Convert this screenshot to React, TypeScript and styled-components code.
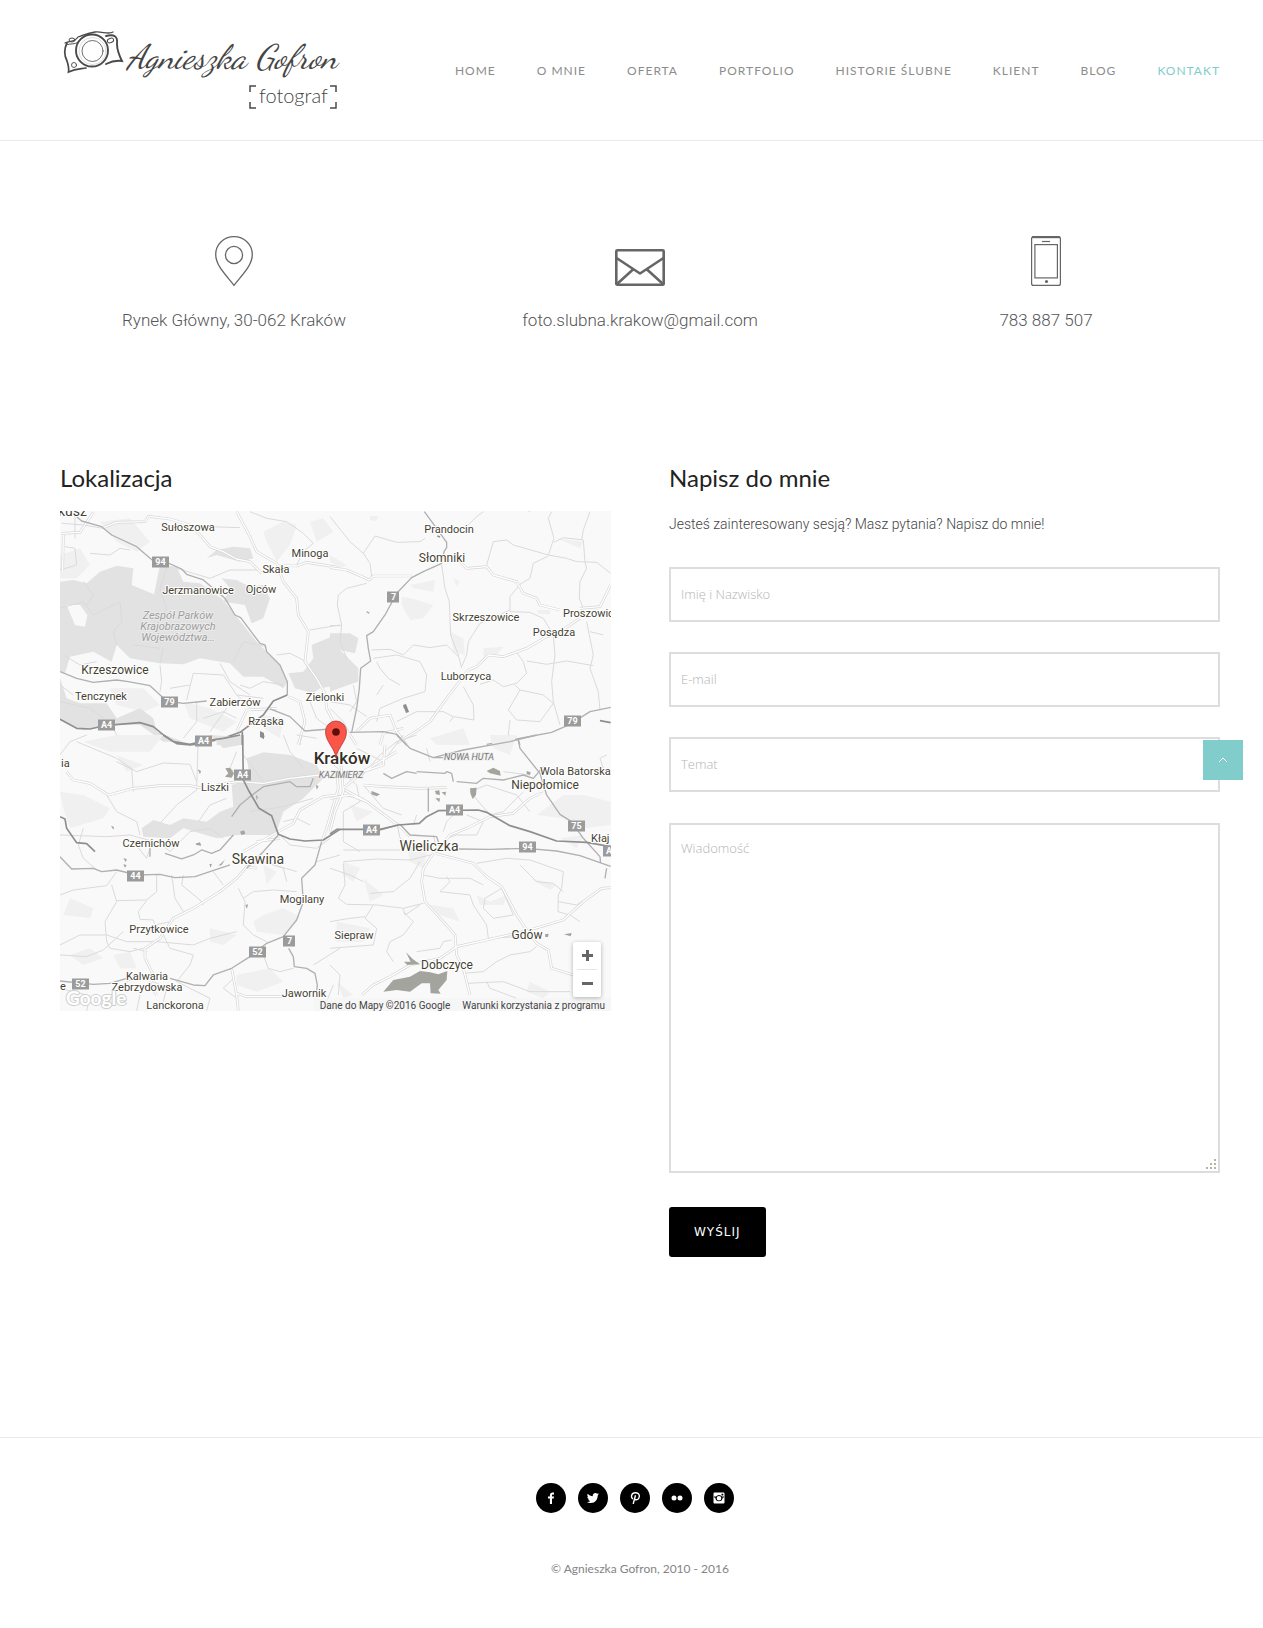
import React from "react";
import styled, { createGlobalStyle } from "styled-components";

const GlobalStyle = createGlobalStyle`
  * { box-sizing: border-box; }
  body { margin: 0; background: #fff; color: #666; font-family: Lato, sans-serif; }
  h2, p { margin: 0; }
`;

const slab = `"Roboto Slab", Roboto, sans-serif`;

const Page = styled.div`
  position: relative;
`;

const Header = styled.header`
  display: flex;
  justify-content: space-between;
  align-items: center;
  height: 141px;
  padding: 2px 43px 0 60px;
  border-bottom: 1px solid #eaeaea;
`;

const LogoLink = styled.a`
  display: block;
  line-height: 0;
`;

const Nav = styled.nav`
  display: flex;
  gap: 41px;
`;

const NavLink = styled.a<{ $active?: boolean }>`
  font-size: 12px;
  line-height: 20px;
  letter-spacing: 1px;
  text-transform: uppercase;
  text-decoration: none;
  white-space: nowrap;
  color: ${(p) => (p.$active ? "#80cdcc" : "#8c8c8c")};
`;

const Main = styled.main`
  padding: 95px 43px 180px 60px;
`;

const Contacts = styled.section`
  display: grid;
  grid-template-columns: repeat(3, 1fr);
  gap: 58px;
  margin-bottom: 131px;
`;

const Contact = styled.div`
  display: flex;
  flex-direction: column;
  align-items: center;
  gap: 20px;
`;

const ContactText = styled.p`
  font-family: ${slab};
  font-weight: 300;
  font-size: 17px;
  line-height: 28px;
  color: #555;
`;

const Columns = styled.div`
  display: grid;
  grid-template-columns: 1fr 1fr;
  gap: 58px;
  align-items: start;
`;

const Heading = styled.h2`
  font-size: 24px;
  font-weight: 400;
  line-height: 26px;
  margin-bottom: 20px;
  color: #222;
`;

const MapBox = styled.div`
  position: relative;
  height: 500px;
  overflow: hidden;
  background: #f9f9f9;
`;

const MapSvg = styled.svg`
  display: block;
  width: 100%;
  height: 100%;
  font-family: Roboto, sans-serif;
`;

const ZoomControl = styled.div`
  position: absolute;
  right: 10px;
  bottom: 14px;
  width: 28px;
  padding: 0 4px;
  background: #fff;
  border-radius: 2px;
  box-shadow: 0 1px 4px rgba(0, 0, 0, 0.3);
`;

const ZoomButton = styled.button`
  display: flex;
  align-items: center;
  justify-content: center;
  width: 100%;
  height: 27px;
  padding: 0;
  border: 0;
  background: none;
  & + & {
    height: 28px;
    border-top: 1px solid #e6e6e6;
  }
`;

const Credits = styled.div`
  position: absolute;
  right: 0;
  bottom: 0;
  display: flex;
  gap: 12px;
  padding: 2px 6px 0;
  background: rgba(245, 245, 245, 0.7);
  font-family: Roboto, sans-serif;
  font-size: 10px;
  line-height: 11px;
  color: #444;
`;

const CreditLink = styled.a`
  color: #444;
  text-decoration: none;
`;

const Intro = styled.p`
  font-family: ${slab};
  font-weight: 300;
  font-size: 14px;
  line-height: 26px;
  margin-bottom: 30px;
  color: #444;
`;

const Form = styled.form`
  display: flex;
  flex-direction: column;
  align-items: stretch;
  gap: 30px;
`;

const fieldStyle = `
  display: block;
  width: 100%;
  margin: 0;
  border: 2px solid #ddd;
  border-radius: 0;
  outline: 0;
  background: #fff;
  color: #666;
  font-family: "Open Sans", sans-serif;
  font-weight: 300;
  font-size: 13px;
  &::placeholder { color: #b4b4b4; opacity: 1; }
`;

const Input = styled.input`
  ${fieldStyle}
  height: 55px;
  padding: 0 10px 2px;
`;

const gripDot = "linear-gradient(#b5b5a2, #b5b5a2)";

const Textarea = styled.textarea`
  ${fieldStyle}
  height: 350px;
  margin-top: 1px;
  padding: 13px 10px;
  line-height: 20px;
  resize: vertical;
  &::-webkit-resizer {
    background-image: ${Array(6).fill(gripDot).join(", ")};
    background-repeat: no-repeat;
    background-size: 2px 2px;
    background-position:
      right 2px bottom 2px, right 6px bottom 2px, right 10px bottom 2px,
      right 2px bottom 6px, right 6px bottom 6px, right 2px bottom 10px;
  }
`;

const Submit = styled.button`
  align-self: flex-start;
  height: 50px;
  margin-top: 4px;
  padding: 0 25px;
  border: 0;
  border-radius: 3px;
  background: #000;
  color: #fff;
  font-family: "DejaVu Sans", sans-serif;
  font-size: 12px;
  letter-spacing: 1px;
`;

const ToTop = styled.a`
  position: absolute;
  top: 740px;
  right: 20px;
  display: flex;
  align-items: center;
  justify-content: center;
  width: 40px;
  height: 40px;
  background: #80cdcc;
`;

const Footer = styled.footer`
  display: flex;
  flex-direction: column;
  align-items: center;
  gap: 44px;
  padding: 45px 43px 46px 60px;
  border-top: 1px solid #eaeaea;
`;

const Socials = styled.div`
  display: flex;
  gap: 12px;
  padding-right: 10px;
`;

const Social = styled.a`
  display: flex;
  align-items: center;
  justify-content: center;
  width: 30px;
  height: 30px;
  border-radius: 50%;
  background: #000;
`;

const Copyright = styled.p`
  font-size: 12px;
  line-height: 24px;
  color: #848484;
`;

const Logo = () => (
  <svg width="282" height="90" viewBox="0 0 282 90" fill="none" stroke="#4a4a4a" strokeLinecap="round">
    <g strokeWidth="1.3" transform="translate(0 1)">
      <path d="M7 16C4 22 4 28 7 34C9 40 9 42 8.500 45C16 41 21 42 26 41" strokeWidth="1.700" />
      <path d="M5 16C10 13 14 16 18 10C24 8 28 6 35 5C42 4 48 8 53 5" />
      <path d="M6 18C11 16 15 18 18 15" strokeWidth="1" />
      <path d="M46 9C54 7 58 9 57 17C57 24 59 28 62 34C56 33 50 35 46 37" strokeWidth="1.900" />
      <circle cx="32" cy="23.500" r="16" strokeWidth="1.900" />
      <circle cx="32.500" cy="24" r="10.500" strokeWidth=".8" />
      <circle cx="32.500" cy="24" r="13.500" stroke="#bbb" strokeWidth=".5" />
      <ellipse cx="12" cy="13" rx="3" ry="2" strokeWidth="1" />
      <ellipse cx="50.500" cy="13.500" rx="3.200" ry="2.200" transform="rotate(-20 50.500 13.500)" strokeWidth="1" />
      <circle cx="14" cy="38" r="2.500" strokeWidth=".9" />
    </g>
    <g fill="#444" stroke="none">
      <text x="67" y="42" fontSize="34" fontStyle="italic" fontFamily='"Dancing Script", "Liberation Serif", cursive'>Agnieszka Gofron</text>
      <text x="199" y="77" fontSize="20" fontWeight="300" fontFamily='"Century Gothic", Lato, sans-serif'>fotograf</text>
    </g>
    <path d="M196 60H190V66M190 76V82H196M270 60H276V66M276 76V82H270" strokeWidth="1.500" strokeLinecap="butt" />
  </svg>
);

const PinIcon = () => (
  <svg width="50" height="50" viewBox="0 0 50 50" fill="none" stroke="#666" strokeWidth="1.300">
    <path d="M25 49.300C18 40 6.700 30 6.700 18.500C6.700 8 15 .7 25 .7S43.300 8 43.300 18.500C43.300 30 32 40 25 49.300Z" />
    <circle cx="25" cy="19" r="8.600" />
  </svg>
);

const MailIcon = () => (
  <svg width="50" height="50" viewBox="0 0 50 50" fill="none" stroke="#666" strokeWidth="2.600" strokeLinejoin="round">
    <rect x="1.300" y="14.300" width="47.400" height="34.400" rx="1" />
    <path d="M1.500 22L25 37.500L48.500 22M2 48L18 33.500M48 48L32 33.500" />
  </svg>
);

const PhoneIcon = () => (
  <svg width="50" height="50" viewBox="0 0 50 50" fill="none" stroke="#666" strokeWidth="1.200">
    <rect x="10.600" y=".7" width="28.800" height="48.700" rx="2" />
    <path d="M11 1.200H39" strokeWidth="2" />
    <rect x="13.900" y="8.600" width="22.500" height="33.300" />
    <path d="M21 5.500H29" />
    <circle cx="25.500" cy="45.500" r="1.600" fill="#666" stroke="none" />
  </svg>
);

type Label = [string, number, number, number?, ("start" | "middle")?];

const towns: Label[] = [
  ["Sułoszowa", 128, 20], ["Minoga", 250, 46], ["Skała", 216, 62], ["Jerzmanowice", 138, 83],
  ["Ojców", 201, 82], ["kusz", -2, 5, 14, "start"], ["Krzeszowice", 55, 163, 12], ["Tenczynek", 41, 189],
  ["Zabierzów", 175, 195], ["Rząska", 206, 214], ["Zielonki", 265, 190], ["Prandocin", 389, 22],
  ["Słomniki", 382, 51, 12], ["Skrzeszowice", 426, 110], ["Proszowice", 503, 106, 11, "start"],
  ["Posądza", 494, 125], ["Luborzyca", 406, 169], ["Wola Batorska", 480, 264, 11, "start"],
  ["Niepołomice", 485, 278, 12], ["ia", 1, 256, 11, "start"], ["Liszki", 155, 280], ["Czernichów", 91, 336],
  ["Skawina", 198, 353, 14], ["Mogilany", 242, 392], ["Przytkowice", 99, 422], ["Kalwaria", 87, 469],
  ["Zebrzydowska", 87, 480], ["Lanckorona", 115, 498], ["Jawornik", 244, 486], ["Wieliczka", 369, 340, 14],
  ["Kłaj", 531, 331, 11, "start"], ["Siepraw", 294, 428], ["Gdów", 467, 428, 12], ["Dobczyce", 387, 458, 12],
  ["e", 0, 479, 11, "start"],
];

const shields: [string, number, number][] = [
  ["94", 100, 51], ["79", 109, 191], ["A4", 46, 214], ["A4", 143, 230], ["7", 333, 86], ["79", 512, 210],
  ["A4", 182, 264], ["44", 75, 365], ["52", 197, 441], ["7", 229, 430], ["52", 20, 473], ["A4", 311, 319],
  ["A4", 394, 299], ["75", 516, 315], ["94", 467, 336], ["A4", 551, 340],
];

// The map sheet is drawn in four quarters, each in its own grid at three units to the pixel.
const quarters = [
  {
    at: "translate(-10 -56) scale(.3333)",
    woods: "M30 380L70 375L110 385L150 350L200 332L250 340L245 390L312 418L330 330L380 335L400 380L450 385L520 435L560 485L620 560L650 590L690 630L712 680L700 700L640 665L580 665L540 625L450 610L400 628L330 625L240 610L200 570L185 620L130 590L60 605L45 655L30 650ZM50 450L75 510L105 515L112 480L90 450ZM515 370L560 375L600 395L640 390L660 430L640 490L605 505L585 450L520 440L540 400ZM715 655L760 650L790 610L785 570L870 535V690L810 700L790 715L735 700ZM30 670L50 730L90 745L170 745L200 790L270 760L310 790L320 830L400 860L340 860L270 810L200 810L100 825L30 795ZM470 310L500 285L550 275L600 280L610 310L570 320L500 300ZM500 850L580 838V870H500Z",
    tint: "M30 300L90 280L120 330L80 370L30 370ZM150 200L240 190L300 260L260 290L200 260ZM640 230L700 200L740 210L720 270L680 320L650 260ZM180 700L280 700L330 750L280 770L200 750ZM400 740L480 760L560 800L520 830L420 790ZM640 780L700 790L690 850L640 820ZM780 200L820 190L850 230L800 260Z",
    minor: "M35 205L100 210L160 220M45 275L75 280L80 330L30 345M75 250V180M120 295L180 300L210 280L240 285M440 225L480 215L570 218M600 170L650 190L710 200L760 235L790 265L760 290L740 330M380 340L480 370L540 345L620 345M30 460L100 440L130 480L210 440L215 500L190 530L200 570M100 380L130 420L110 450M350 340L330 400L350 460L330 500M330 630L335 680L330 710M410 735L430 655L520 660L560 720L600 760M510 625L540 680L600 720M550 620L580 560L650 575M570 690L600 700L640 680L700 690M30 690L70 720M360 700L420 690M680 600L720 595L760 615L780 650M780 525L870 510M440 740V800L400 850M460 790L520 770L560 790M340 580L330 625M250 570L330 580M30 740L120 760L160 790M480 830L530 760M560 720L640 730M740 840L800 850M780 740L800 790L840 820M180 800L200 840L180 870M40 600L90 630L140 620",
    double: "M35 235L90 232L130 172M38 345L40 240M160 218L200 202L285 200L295 184L360 192L420 210L450 240L480 275L520 290L560 312L600 320L635 355M560 170L600 245L620 290L680 325L700 380L740 430L745 480L775 530L765 620L800 670L825 715L830 760L850 800M680 330L740 333L770 322L870 338M745 870L765 800L750 740L715 725M560 830L590 765L680 760",
    mid: "M80 185L95 198L155 215L185 240L260 275L310 318M350 322L395 342L410 358L460 375L525 430L555 480L572 488L630 565L645 570L650 590L690 630L712 680V720M30 650L80 670L130 682L200 675L235 680L300 692L350 738L400 745L470 738M660 762L720 785L765 828L840 822",
    main: "M30 793L80 820L120 822L170 811L270 803L310 815L340 840L380 866L420 870L460 865L520 850L570 832L640 780L670 738L712 720M577 830V870",
  },
  {
    at: "translate(270 -56) scale(.3333)",
    woods: "M0 535L60 535L85 550L75 595L30 585L85 640L85 680L40 695L0 710Z",
    tint: "M215 425L245 430L310 450L280 490L240 495L215 450ZM240 390L315 375L310 410L250 400ZM360 530L400 550L405 600L370 590ZM300 850L400 820L420 870H320ZM620 465L660 465V478L625 476ZM370 370L390 380L380 395ZM460 580L520 575L500 600L460 605ZM680 250L760 260L750 280ZM120 183L145 183L140 198L120 196ZM0 300L50 330L30 340L0 320Z",
    minor: "M0 185L60 260L100 295L120 325L125 365M100 295L135 243L200 262L270 260L285 250M410 215L440 185L460 170M110 385L50 400L25 420L22 450L35 510L30 560L50 610M0 512H35M335 330L345 400L358 440L362 540L385 600L395 640M470 330L490 260L530 255L550 270L655 300L710 310L740 320L800 322L842 355M665 170L655 190L672 250L655 300M672 262L700 248L760 255L765 320L770 340L750 380L748 430L760 460M780 170L760 225L755 255M655 303L610 325L600 370L570 388L540 425L540 470L600 472L640 490L670 540L675 600L665 680L670 740L690 810M540 465L450 505L415 560L410 600L395 635M125 585L180 583L220 600L250 570L300 578L350 570L385 605M770 500L790 600L780 640L805 710L810 765M450 688L490 675L520 695L560 685L590 655L580 620L560 592M590 618L650 628L710 618L790 632M570 705L535 765L560 795L630 800L670 745L640 720L570 705L555 690M400 695L430 750L432 795L370 785L360 800M130 610L200 600L270 620L290 660L285 710L220 730L150 760L140 800M140 620L150 640L175 670L210 690M370 785L340 770L260 770L200 800M0 740L60 750L110 785M70 690L80 740L60 770M160 690L140 720M540 795L535 840L560 845M600 170L550 145M820 540L780 530M0 760L40 800L80 870",
    double: "M0 338L50 345L90 362L118 375L130 363H245M390 320L410 340L470 335L490 360L560 380L580 415L620 430L630 450L690 465M750 460L810 455L842 390M750 490L690 530L650 545L590 580L520 605L475 600L440 635L415 645L350 730L300 800L265 825L200 865M80 870L60 840M80 830L120 790L180 780L200 830L230 870M150 870L160 835L220 820",
    mid: "M283 170L320 220L350 262V278L342 290L335 325L280 350L245 368L200 415L165 480L130 530L110 542L115 580L122 618L92 640L88 700L80 760L65 832M60 832L160 830L200 838L230 870M470 868L560 852L665 832L720 808L780 770L842 757M565 855L570 870M110 470L118 475M220 755L235 770",
    main: "M810 797L842 803M322 243L330 246",
  },
  {
    at: "translate(-10 224) scale(.3333)",
    woods: "M590 70L640 52L720 60L800 90L820 130L760 190L700 230L680 290L660 300L560 300L500 310L400 280L360 310L280 305L275 280L310 255L360 270L400 250L470 260L510 230L550 215L545 150L600 130ZM480 0L560 5L570 30L520 40Z",
    tint: "M30 170L100 180L180 220L160 250L60 280L40 220ZM640 170L700 200L650 250ZM100 20L200 0L340 0L300 50L180 50ZM60 490L130 520L120 550L40 540ZM640 540L700 520L750 545L700 600L620 590L610 560ZM60 660L120 640L160 670L100 690ZM560 720L660 700L700 740L620 770L560 750ZM200 60L280 90L230 110ZM190 660L240 650L260 700L210 700ZM640 390L680 410L650 450ZM480 580L560 600L520 630L480 620Z",
    minor: "M30 60L60 20L110 0M80 20L200 70L245 100L250 170M200 80L260 110L340 84L420 88L440 140M170 180L200 230L260 260L270 300M330 265L380 210L440 165L445 0M445 260L480 210L530 190M30 300L170 305L240 300L330 325L360 350L420 290L480 280L520 310M85 330L100 370L140 405M100 280L85 330M30 480L70 465L170 452L200 410M185 450L200 500L165 560L170 620L180 640M200 497L290 495L320 470V420M290 497L265 530L270 553L310 555L315 570L360 560M365 420L375 490L400 530M400 420L395 450L450 495L460 510M490 410L520 450M565 460L585 500L580 570L610 600L650 620M580 490L610 470L670 465L740 470M30 630L90 600L170 600L230 620L320 620L430 630L480 610L560 590M30 660L110 665L160 645L220 590M340 600L360 640L430 660L420 690L380 740L480 790L470 828M180 640L240 650L280 640M300 700L310 740L350 760L340 800M640 660L655 700L690 710L730 700M790 690L870 640M850 750L830 800M560 790L520 760L550 730M600 230L700 215L790 190M780 270L740 250L700 260M680 290L720 330L800 340L840 310M640 380L700 400L710 440M560 50L540 100L580 130M640 140L580 60M700 0L720 50L760 100M750 30L755 0M740 410L640 380L600 390M800 380L870 360M250 320L290 370L300 340M30 760L110 780M230 740L280 720M270 780L260 828M120 780L110 828M250 640L290 650",
    double: "M50 110L70 135L120 145L175 180L250 160L330 152L420 152L460 160M500 150L560 140L640 145M640 145L720 130L810 120M860 110L865 160L830 280L815 320M865 180L820 185L750 225L730 265L685 290L580 350M620 400L590 395L560 430L510 470L430 520L370 550L330 610L285 640V670L310 720L300 750L320 780M620 320L690 310M545 700L560 780L565 828M560 775L590 785H695",
    mid: "M545 245L570 210L600 185L640 155L720 140L740 155L780 155L790 130M30 365L65 402L130 400L155 410L200 405L260 420L330 418L375 428L435 425L540 390M345 355L395 372L430 360L455 345L485 355L510 345L550 300M685 300L640 350L590 400M30 738L130 748L180 745L230 730M360 730L430 750L465 752L490 720L545 700L600 665L650 625L700 605L740 555L760 500L755 430L795 390L815 320M716 640L730 665L733 695L770 700L795 715L802 750L800 770M300 340V365",
    main: "M340 0L370 20L420 28L460 18L520 10L570 0M578 0L580 135L595 165L627 220L665 242L685 298L720 312L765 318L820 315L870 283M30 245L45 252L50 280L80 323L110 326L135 350",
  },
  {
    at: "translate(270 224) scale(.3333)",
    woods: "",
    tint: "M620 240L700 180L760 180L842 200V270L760 280L700 250ZM230 330L290 350L280 400L240 380ZM40 380L90 400L70 440L40 420ZM300 510L370 520L390 560L330 540ZM100 430L160 480L120 500ZM440 480L480 500L530 480L520 510L450 510ZM600 740L660 770L640 790L590 770ZM20 560L120 580L100 620L20 620ZM20 740L70 780L40 790ZM480 0L560 0L540 60L490 40ZM60 210L130 230L80 260ZM600 430L680 450L660 465ZM690 310L760 300L740 340Z",
    minor: "M0 80L80 150L90 200L40 230V320L90 350M90 130L150 60L200 20L260 0M100 150L160 220L215 240M80 40L160 80L220 0M20 60L110 70M200 260L210 310L240 330M40 345H210M40 380L140 372L240 375L300 360M120 475L190 470L240 430L270 380M40 385L45 450L25 490L50 508L140 510L220 520L280 505M220 520L225 540L270 510M280 420L330 430L420 430L460 450M350 425L360 440L330 470L420 480L430 510L470 570L475 610L560 605M465 490L515 460L550 540L490 550L460 520L465 490M440 385L530 370L600 375L700 410L695 460L685 480L684 530L720 540L750 560M685 500L740 510L800 470M570 390L620 440L670 445L700 470M130 510L105 550L140 580L130 630L0 640M105 545L60 550L0 560M220 530L250 560L220 600L180 620L170 650L190 680M260 650L330 640L340 620L365 615M410 745L520 740L600 770L720 770M620 635L600 650L540 660L500 680L460 710L400 715M0 690L30 720L25 780M470 740L480 760L560 790M340 290L350 260L380 230M310 300L320 340M410 240L460 260L440 300L380 300L350 310M550 235L600 190L640 170M420 170L470 150L560 180L600 230M830 60L810 70L820 100M580 170L520 230L480 240L420 170M520 110L600 120M290 40L300 80M120 210L100 190L20 180M260 240L250 270M0 400L60 420L100 440",
    double: "M25 0L40 170L15 230L0 290M45 165L110 200L210 275L240 305M110 200L60 180L0 190M100 150L160 155L270 160L350 158M630 175L600 190L550 235L480 245L410 280L360 300L320 350M310 355L280 400L275 440L285 500L340 560L375 600L380 660L400 700L420 780M315 355L430 385L470 425L515 455L560 540L590 585L620 625L655 645L665 700L730 720M580 590L470 615L380 635L330 670L240 690L180 725L130 750L95 780M600 585L700 555L760 500L815 460L842 458M100 110L160 90L165 30M40 160L100 110L200 50",
    mid: "M200 0L240 40L310 68H340M310 68L400 45L540 20L620 0M565 15L570 40L630 115L650 180L690 238L725 260L760 310L810 365L812 385M150 285L210 268L240 300L320 305L330 335M385 342L480 343L590 340L680 348L750 362L842 394M295 160V230M160 115L185 130L230 110L260 115M260 110L345 115L350 110L365 115L370 140M380 140L440 145L460 130L520 135L580 120L610 130L640 95M830 400L825 430",
    main: "M0 297L20 283L100 283M150 283L205 270L268 265L290 245L325 227L445 225L470 232L540 272L600 290L680 318L770 322L842 335",
  },
];

const MapDrawing = () => (
  <MapSvg viewBox="0 0 551 500" preserveAspectRatio="xMidYMid slice" role="img" aria-label="Mapa okolic Krakowa">
    <rect width="551" height="500" fill="#f9f9f9" />
    {quarters.map((q) => (
      <g key={q.at} transform={q.at} fill="none" strokeLinejoin="round">
        <path d={q.tint} fill="#f0f0f0" />
        <path d={q.woods} fill="#e2e2e2" fillRule="evenodd" />
        <path d={q.minor} stroke="#dadada" strokeWidth="3" />
        <path d={q.double} stroke="#d6d6d6" strokeWidth="8" />
        <path d={q.double} stroke="#fff" strokeWidth="4" />
        <path d={q.mid} stroke="#b0b0b0" strokeWidth="4" />
        <path d={q.main} stroke="#8f8f8f" strokeWidth="5" />
      </g>
    ))}
    <g transform="translate(270 224) scale(.3333)" fill="#a3a49d">
      <path d="M160 770L190 735L240 725L270 708L300 712L325 718L352 708L350 735L325 765L332 776L302 775L300 745L275 745L240 770L200 765ZM228 652L248 672L270 688L232 690L222 680L242 680ZM125 168L150 178L140 184L124 178ZM470 108L490 98L510 108L512 122L480 115ZM420 160L440 158L438 180L428 192L422 178ZM315 168L328 166L330 180L318 178ZM316 190L330 190L328 202ZM335 172L348 170L346 182ZM590 108L602 112L600 120L590 116ZM645 598L656 596L654 606H646ZM702 598L725 594L722 604Z" />
    </g>
    <g transform="translate(-10 224) scale(.3333)" fill="#a3a49d">
      <path d="M526 100L540 98L552 115L545 128L525 125L535 115ZM570 290L582 286L586 296L575 300ZM630 0L645 2L640 12ZM443 103L453 108L450 118ZM220 370L230 372L228 382ZM220 388L230 390L225 398ZM478 388L486 386L482 398ZM505 392L525 374L515 390ZM586 510L594 508L591 522ZM798 150L806 154L800 164ZM618 180L624 186L620 196ZM183 272L192 276L190 284ZM436 326L450 322L454 332L440 330Z" />
    </g>
    <path d="M343 194L346 193L349 201L346 202ZM200 220L204 222L204 228L200 226Z" fill="#8d8d8d" />
    {shields.map(([name, x, y], i) => (
      <g key={i}>
        <rect x={x - (name.length > 1 ? 8 : 6)} y={y - 5.5} width={name.length > 1 ? 17 : 12} height="11" fill="#9b9b9b" />
        <text x={x + 0.5} y={y + 3} fontSize="9" fontWeight="700" fill="#fff" textAnchor="middle">{name}</text>
      </g>
    ))}
    <g fill="#9d9d9d" stroke="#eee" strokeWidth="1.500" paintOrder="stroke" fontStyle="italic" fontSize="11" textAnchor="middle">
      <text x="118" y="108">Zespół Parków</text>
      <text x="118" y="119">Krajobrazowych</text>
      <text x="118" y="130">Województwa…</text>
      <g fontSize="9" fill="#777">
        <text x="281" y="267">KAZIMIERZ</text>
        <text x="409" y="249">NOWA HUTA</text>
      </g>
    </g>
    <g fill="#453f33" stroke="#fff" strokeWidth="2" strokeLinejoin="round" paintOrder="stroke">
      {towns.map(([name, x, y, size = 11, anchor = "middle"]) => (
        <text key={name} x={x} y={y} fontSize={size} textAnchor={anchor}>{name}</text>
      ))}
      <text x="282" y="253" fontSize="17" fontWeight="500" fill="#332e25" textAnchor="middle">Kraków</text>
    </g>
    <path d="M276 247C275 237 265.500 231 265.500 220.500A10.500 10.500 0 0 1 286.500 220.500C286.500 231 277 237 276 247Z" fill="#fb5448" stroke="#b33a31" strokeWidth=".8" />
    <circle cx="276" cy="221" r="3.800" fill="#5c0f0d" />
    <text x="6" y="494" fontSize="19" fontWeight="700" fontFamily="Lato, sans-serif" fill="#fff" stroke="#cfcfcf" strokeWidth="2" paintOrder="stroke">Google</text>
  </MapSvg>
);

const glyph = { width: 12, height: 12, viewBox: "0 0 12 12", fill: "#fff" };

const socials = [
  { name: "Facebook", icon: <svg {...glyph}><path d="M4.900 12V6.600H3V4.600H4.900V3.200C4.900 1.300 6 .5 7.600 .5H9V2.400H8C7.200 2.400 7 2.800 7 3.400V4.600H9L8.700 6.600H7V12Z" /></svg> },
  { name: "Twitter", icon: <svg {...glyph}><path d="M11.900 2.200L10.700 3.500C10.800 7.500 8 11 4 11C2.400 11 1 10.600 0 9.900C1.300 10 2.500 9.700 3.400 9C2.300 8.900 1.500 8.200 1.200 7.200H2.200C1 6.800 .3 5.900 .3 4.700L1.300 5C.3 4.200 .1 2.900 .7 1.800C2 3.300 3.700 4.200 5.800 4.300C5.400 2.500 6.700 1 8.400 1C9.100 1 9.700 1.300 10.200 1.800L11.700 1.200L10.900 2.500Z" /></svg> },
  { name: "Pinterest", icon: <svg {...glyph}><path d="M4 7C1.400 5.400 2.300 .8 6.300 .8C9 .8 10.500 2.400 10.300 4.500C10 7.500 7.300 8.600 5.800 7.200M6.500 3.200L4.200 11.900" fill="none" stroke="#fff" strokeWidth="1.400" /></svg> },
  { name: "Flickr", icon: <svg {...glyph}><circle cx="3" cy="6" r="2.500" /><circle cx="9" cy="6" r="2.500" /></svg> },
  { name: "Instagram", icon: <svg {...glyph}><path fillRule="evenodd" d="M1.500 .5H10.500Q11.500 .5 11.500 1.500V10.500Q11.500 11.500 10.500 11.500H1.500Q.5 11.500 .5 10.500V1.500Q.5 .5 1.500 .5ZM8.500 1.800V3.500H10.300V1.800ZM1 4.600V5.500H2.300A3.700 3.700 0 1 0 9.700 5.500H11V4.600H9A3.700 3.700 0 0 0 3 4.600ZM6 3.900A2.300 2.300 0 1 1 6 8.500A2.300 2.300 0 1 1 6 3.900Z" /></svg> },
];

const navItems = ["Home", "O mnie", "Oferta", "Portfolio", "Historie ślubne", "Klient", "Blog", "Kontakt"];

export default function App() {
  return (
    <Page>
      <GlobalStyle />
      <Header>
        <LogoLink href="#" aria-label="Agnieszka Gofron fotograf"><Logo /></LogoLink>
        <Nav>
          {navItems.map((item) => (
            <NavLink key={item} href="#" $active={item === "Kontakt"}>{item}</NavLink>
          ))}
        </Nav>
      </Header>
      <Main>
        <Contacts>
          <Contact><PinIcon /><ContactText>Rynek Główny, 30-062 Kraków</ContactText></Contact>
          <Contact><MailIcon /><ContactText>foto.slubna.krakow@gmail.com</ContactText></Contact>
          <Contact><PhoneIcon /><ContactText>783 887 507</ContactText></Contact>
        </Contacts>
        <Columns>
          <section>
            <Heading>Lokalizacja</Heading>
            <MapBox>
              <MapDrawing />
              <Credits>
                <span>Dane do Mapy ©2016 Google</span>
                <CreditLink href="#">Warunki korzystania z programu</CreditLink>
              </Credits>
              <ZoomControl>
                <ZoomButton type="button" aria-label="Powiększ">
                  <svg width="11" height="11" viewBox="0 0 11 11"><path d="M0 5.500H11M5.500 0V11" stroke="#666" strokeWidth="3" /></svg>
                </ZoomButton>
                <ZoomButton type="button" aria-label="Pomniejsz">
                  <svg width="11" height="11" viewBox="0 0 11 11"><path d="M0 5.500H11" stroke="#666" strokeWidth="3" /></svg>
                </ZoomButton>
              </ZoomControl>
            </MapBox>
          </section>
          <section>
            <Heading>Napisz do mnie</Heading>
            <Intro>Jesteś zainteresowany sesją? Masz pytania? Napisz do mnie!</Intro>
            <Form onSubmit={(e) => e.preventDefault()}>
              <Input type="text" aria-label="Imię i Nazwisko" placeholder="Imię i Nazwisko" />
              <Input type="email" aria-label="E-mail" placeholder="E-mail" />
              <Input type="text" aria-label="Temat" placeholder="Temat" />
              <Textarea aria-label="Wiadomość" placeholder="Wiadomość" />
              <Submit type="submit">WYŚLIJ</Submit>
            </Form>
          </section>
        </Columns>
      </Main>
      <Footer>
        <Socials>
          {socials.map((s) => (
            <Social key={s.name} href="#" aria-label={s.name}>{s.icon}</Social>
          ))}
        </Socials>
        <Copyright>© Agnieszka Gofron, 2010 - 2016</Copyright>
      </Footer>
      <ToTop href="#" aria-label="Do góry">
        <svg width="10" height="6" viewBox="0 0 10 6" fill="none" stroke="#fff"><path d="M1 5L5 1L9 5" /></svg>
      </ToTop>
    </Page>
  );
}
